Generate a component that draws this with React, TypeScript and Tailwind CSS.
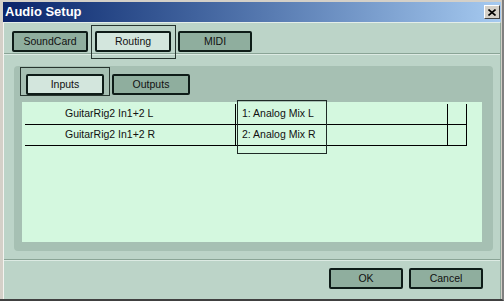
import type { ReactNode } from "react";

const font = { fontFamily: '"Liberation Sans", Arial, sans-serif' };

function SkinButton({
  children,
  active = false,
  w = "w-[76px]",
  frame,
}: {
  children: ReactNode;
  active?: boolean;
  w?: string;
  frame?: string;
}) {
  return (
    <div
      className={`relative flex h-[21px] ${w} items-center justify-center rounded-[2px] border-2 border-[#0e1c18] text-[10.5px] text-[#111] ${
        active ? "bg-[#d3e6dd]" : "bg-[#8fae9e]"
      }`}
    >
      {children}
      {frame && <span className={`pointer-events-none absolute border border-[#27352f] ${frame}`} />}
    </div>
  );
}

const rows = [
  { src: "GuitarRig2 In1+2 L", dst: "1: Analog Mix L" },
  { src: "GuitarRig2 In1+2 R", dst: "2: Analog Mix R" },
];

export default function App() {
  return (
    <div
      style={font}
      className="flex h-[301px] w-[504px] flex-col border-r-2 border-b-2 border-r-[#808080] border-b-[#404040] bg-[#d4d0c8] pt-[2px] pl-[3px] pr-[1px]"
    >
      {/* Title bar */}
      <div className="flex h-[20px] shrink-0 items-center justify-between bg-gradient-to-r from-[#0a246a] to-[#a6caf0] pl-[2px] pr-[1px]">
        <span className="text-[13px] font-bold text-white">Audio Setup</span>
        <div className="flex h-[14px] w-[16px] items-center justify-center border-t border-l border-t-white border-l-white border-r border-b border-r-[#404040] border-b-[#404040] bg-[#d4d0c8]">
          <svg width="8" height="7" viewBox="0 0 8 7">
            <path d="M0.5 0.5 L7.5 6.5 M7.5 0.5 L0.5 6.5" stroke="#000" strokeWidth="1.6" />
          </svg>
        </div>
      </div>

      {/* Body */}
      <div className="flex flex-1 flex-col border-t border-l border-t-[#e4eee9] border-l-[#f4f4f0] border-r border-r-[#8fa99c] bg-[#bcd4c8]">
        {/* Tabs */}
        <div className="flex h-[30px] shrink-0 gap-[7px] pt-[8px] pl-[8px]">
          <SkinButton>SoundCard</SkinButton>
          <SkinButton active frame="-left-[6px] -top-[8px] -right-[7px] -bottom-[9px]">
            Routing
          </SkinButton>
          <SkinButton w="w-[74px]">MIDI</SkinButton>
        </div>
        <div className="h-[2px] shrink-0 border-t border-t-[#8aa496] border-b border-b-[#dceae3]" />

        {/* Routing panel */}
        <div className="flex h-[204px] shrink-0 flex-col pt-[11px] pl-[10px]">
          <div className="flex h-[185px] w-[479px] flex-col rounded-[4px] bg-[#a6c0b3] pt-[8px] pl-[12px]">
            <div className="flex gap-[8px]">
              <SkinButton w="w-[78px]" active frame="-left-[8px] -top-[9px] -right-[8px] -bottom-[3px]">
                Inputs
              </SkinButton>
              <SkinButton w="w-[78px]">Outputs</SkinButton>
            </div>
            <div className="relative -ml-[4px] mt-[7px] h-[140px] w-[460px] bg-[#d4f8df] pt-[2px] pl-[3px] text-[10.5px] text-[#111]">
              {rows.map((r) => (
                <div key={r.dst} className="flex h-[21px] w-[442px] border-b border-black">
                  <div className="flex w-[211px] items-center border-r border-black pl-[40px]">{r.src}</div>
                  <div className="flex w-[212px] items-center border-r border-black pl-[6px]">{r.dst}</div>
                  <div className="w-[19px] border-r border-black" />
                </div>
              ))}
              <span className="pointer-events-none absolute left-[215px] -top-[2px] h-[54px] w-[90px] border border-[#1f2b27]" />
            </div>
          </div>
        </div>
        <div className="h-[2px] shrink-0 border-t border-t-[#8aa496] border-b border-b-[#dceae3]" />

        {/* Footer */}
        <div className="flex flex-1 justify-end gap-[6px] pt-[7px] pr-[17px]">
          <SkinButton w="w-[74px]">OK</SkinButton>
          <SkinButton w="w-[74px]">Cancel</SkinButton>
        </div>
      </div>
    </div>
  );
}
